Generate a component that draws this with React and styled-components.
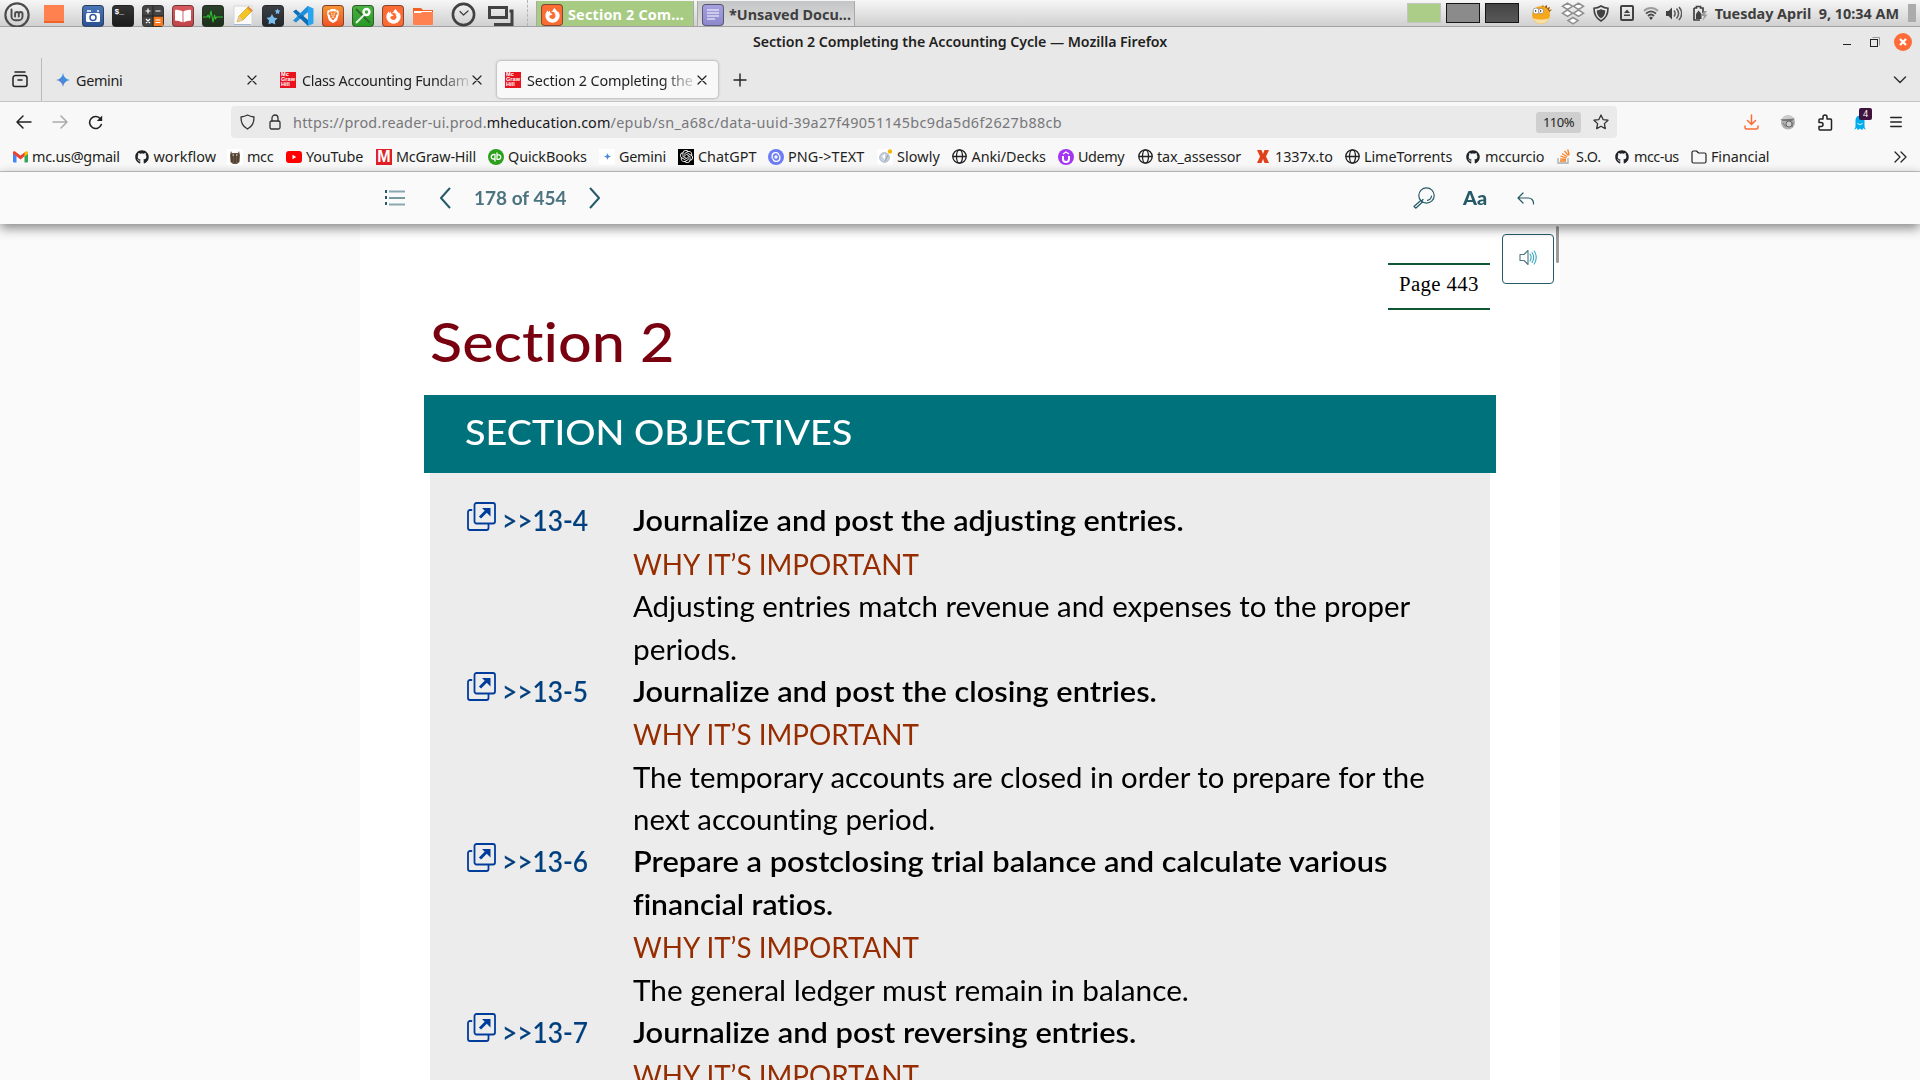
import React, { useLayoutEffect, useRef, useState } from "react";
import styled, { createGlobalStyle, css } from "styled-components";
import { FaGithub, FaFirefoxBrowser, FaBookOpen } from "react-icons/fa";
import { SiBrave, SiOpenai } from "react-icons/si";

const UI = `"Noto Sans", "Open Sans", sans-serif`;
const BOOK = `Lato, "Open Sans", sans-serif`;

const Global = createGlobalStyle`
  * { box-sizing: border-box; }
  html, body { margin: 0; height: 100%; overflow: hidden; background: #fafafa; }
  svg { display: block; flex: none; }
`;

/* A single line of text whose tracking is adjusted to fill a given width. */
const Line = styled.span`
  display: inline-block;
  white-space: pre;
  flex: none;
  transform-origin: left center;
  font-variant-ligatures: none;
  color: ${(p) => p.$color || "inherit"};
  font-weight: ${(p) => p.$weight || "inherit"};
  -webkit-text-stroke: ${(p) => p.$ink || 0}px currentColor;
`;
function Fit({ w, children, color, weight }) {
  const ref = useRef(null);
  const [spacing, setSpacing] = useState(0);
  useLayoutEffect(() => {
    setSpacing((w - ref.current.offsetWidth) / children.length);
  }, [w, children]);
  return (
    <Line ref={ref} $color={color} $weight={weight} style={{ letterSpacing: `${spacing}px` }}>
      {children}
    </Line>
  );
}
/* The same, but the letters themselves widen. */
function Stretch({ w, children, color, weight, ink }) {
  const ref = useRef(null);
  const [scale, setScale] = useState(1);
  useLayoutEffect(() => {
    setScale(w / ref.current.offsetWidth);
  }, [w, children]);
  return (
    <Line ref={ref} $color={color} $weight={weight} $ink={ink} style={{ transform: `scaleX(${scale})` }}>
      {children}
    </Line>
  );
}

const Screen = styled.div`
  width: 1920px;
  height: 1080px;
  overflow: hidden;
  display: flex;
  flex-direction: column;
  font-family: ${UI};
  font-size: 14.4px;
  color: #1f1f22;
`;

/* ---------- Desktop panel ---------- */
const Panel = styled.header`
  height: 27px;
  flex: none;
  display: flex;
  align-items: center;
  background: linear-gradient(#f6f6f6, #d0d0d0);
  border-bottom: 1px solid #a2a2a2;
  color: #3e3e3e;
`;
const Slot = styled.div`
  width: ${(p) => p.$w}px;
  height: 26px;
  flex: none;
  display: flex;
  align-items: center;
  padding-left: ${(p) => p.$pl || 0}px;
  padding-top: ${(p) => p.$pt || 0}px;
`;
const AppTile = styled.div`
  width: 22px;
  height: 22px;
  margin-top: 6px;
  border-radius: 4px;
  border: 1px solid rgba(40, 40, 40, 0.55);
  background: ${(p) => p.$bg};
  color: #fff;
  display: flex;
  align-items: center;
  justify-content: center;
`;
const Prompt = styled.div`
  align-self: flex-start;
  width: 17px;
  font: 700 8px/11px "Liberation Mono", monospace;
`;
const Separator = styled.div`
  width: 1px;
  height: 26px;
  flex: none;
  border-left: 1px dashed #b4b4b4;
  margin-right: 8px;
`;
const TaskButton = styled.div`
  width: ${(p) => p.$w}px;
  height: 25px;
  margin: 1px 3px 0 0;
  padding-left: 4px;
  flex: none;
  display: flex;
  align-items: center;
  gap: 5px;
  font-weight: 700;
  border: 1px solid #a9aaa6;
  border-width: 0 1px;
  background: ${(p) => (p.$active ? "#a7cb83" : "linear-gradient(#c4c5c6, #dcdcdc)")};
  color: ${(p) => (p.$active ? "#fff" : "#3f3f3f")};
  ${AppTile} { margin-top: 3px; }
  ${Line} { margin-top: 2px; }
`;
const Workspace = styled.div`
  width: 34px;
  height: 20px;
  margin: 0 5px 0 0;
  flex: none;
  background: ${(p) => p.$bg};
  border: 1px solid ${(p) => p.$edge};
`;
const Spacer = styled.div`
  flex: 1;
`;
const Clock = styled.div`
  font-weight: 700;
  font-size: 14.4px;
  display: flex;
  padding-top: 1px;
`;
const PanelGrip = styled.div`
  width: 8px;
  height: 18px;
  margin: 0 4px 0 9px;
  background: #ababab;
`;

/* ---------- Window frame ---------- */
const TitleBar = styled.div`
  height: 31px;
  flex: none;
  display: flex;
  align-items: center;
  padding-left: 753px;
  background: #e8e8e8;
  font-weight: 600;
  font-size: 14.2px;
  ${Line} { margin-top: -2px; }
`;
const WindowButtons = styled.div`
  display: flex;
  align-items: center;
  padding: 0 8px 1px 0;
`;
const TabStrip = styled.div`
  height: 44px;
  flex: none;
  display: flex;
  align-items: center;
  background: #e8e8e8;
  border-bottom: 1px solid #c5c5c5;
`;
const ViewButton = styled.div`
  width: 42px;
  height: 43px;
  flex: none;
  display: flex;
  align-items: center;
  padding-left: 12px;
  border-right: 1px solid #bababa;
`;
const Tab = styled.div`
  width: ${(p) => p.$w}px;
  height: 37px;
  margin-left: ${(p) => p.$ml || 0}px;
  padding-left: ${(p) => p.$pl}px;
  flex: none;
  display: flex;
  align-items: center;
  border-radius: 4px;
  ${(p) =>
    p.$active &&
    css`
      background: #f8f8f8;
      box-shadow: 0 0 3px rgba(0, 0, 0, 0.4);
    `}
`;
const TabTitle = styled.div`
  width: ${(p) => p.$w}px;
  margin: 1px 3px 0 6px;
  flex: none;
  ${(p) => p.$fade && css`mask-image: linear-gradient(to left, rgba(0, 0, 0, 0.15), #000 32px);`}
`;

/* ---------- Navigation ---------- */
const NavBar = styled.div`
  height: 40px;
  flex: none;
  display: flex;
  align-items: center;
  background: #f8f8f8;
  padding-left: 16px;
`;
const UrlBar = styled.div`
  width: 1386px;
  height: 32px;
  flex: none;
  display: flex;
  align-items: center;
  padding-left: 9px;
  border-radius: 4px;
  background: #eaeaea;
  color: #77777a;
`;
const UrlText = styled.div`
  display: flex;
  margin-left: 12px;
`;
const ZoomBadge = styled.div`
  width: 45px;
  height: 21px;
  display: flex;
  align-items: center;
  justify-content: center;
  border-radius: 3px;
  background: #cfcfcf;
  color: #1f1f22;
  font-size: 13px;
  margin-right: 12px;
`;
const GhostWrap = styled.div`
  position: relative;
  width: 36px;
  height: 16px;
`;
const GhostBadge = styled.div`
  position: absolute;
  left: 5px;
  top: -6px;
  width: 13px;
  height: 12px;
  border-radius: 2px;
  background: #40133f;
  color: #fff;
  font-size: 9px;
  line-height: 12px;
  text-align: center;
`;
const BookmarkBar = styled.div`
  height: 30px;
  flex: none;
  display: flex;
  align-items: center;
  padding: 0 13px 0 12px;
  background: #f8f8f8;
  border-bottom: 1px solid #c5c5c5;
`;
const Bookmark = styled.div`
  width: ${(p) => p.$w}px;
  flex: none;
  display: flex;
  align-items: center;
  gap: 4px;
`;
const Favicon = styled.div`
  width: 16px;
  height: 16px;
  flex: none;
  display: flex;
  align-items: center;
  justify-content: center;
  border-radius: ${(p) => p.$r || 0};
  background: ${(p) => p.$bg || "transparent"};
  color: ${(p) => p.$color || "#fff"};
  font: 700 ${(p) => p.$size || 14}px/16px "Liberation Sans", sans-serif;
`;
const McLogo = styled.div`
  width: 16px;
  height: 16px;
  flex: none;
  padding: 0 0 0 1px;
  background: #e8131f;
  color: #fff;
  font: 700 5.6px/5px "Liberation Sans", sans-serif;
`;

/* ---------- Reader ---------- */
const ReaderBar = styled.div`
  position: relative;
  z-index: 1;
  height: 52px;
  flex: none;
  display: flex;
  align-items: center;
  background: #fafafa;
  box-shadow: 0 4px 11px rgba(0, 0, 0, 0.48);
  padding-left: 385px;
  font-family: ${BOOK};
  color: #265a68;
`;
const PageCount = styled.div`
  width: 138px;
  padding-left: 23px;
  font-size: 18.6px;
  font-weight: 700;
  color: #4c7480;
`;
const TextSize = styled.div`
  width: 54px;
  font-size: 19px;
  font-weight: 900;
  margin-top: -2px;
`;
const Reader = styled.main`
  flex: 1;
  min-height: 0;
  width: 1200px;
  margin: 0 auto;
  background: #fff;
  font-family: ${BOOK};
  display: flex;
  flex-direction: column;
`;
const TopRow = styled.div`
  display: flex;
  justify-content: flex-end;
  align-items: flex-start;
  height: 86px;
  flex: none;
`;
const PageLabel = styled.div`
  width: 102px;
  height: 47px;
  margin: 39px 12px 0 0;
  border: 2px solid #0f5735;
  border-width: 2px 0;
  padding-left: 11px;
  font: 20.8px/38px "Liberation Serif", serif;
  color: #000;
`;
const AudioButton = styled.div`
  width: 52px;
  height: 50px;
  margin-top: 10px;
  border: 1px solid #265a68;
  border-radius: 4px;
  display: flex;
  justify-content: center;
  padding-top: 14px;
  background: #fff;
`;
const ScrollThumb = styled.div`
  width: 3px;
  height: 37px;
  margin: 2px 1px 0 2px;
  border-radius: 2px;
  background: #9c9c9c;
`;
const Heading = styled.h1`
  margin: 0 0 0 70px;
  height: 85px;
  flex: none;
  font-size: 54.5px;
  font-weight: 500;
  line-height: 63px;
  color: #78000f;
`;
const Banner = styled.h2`
  margin: 0 64px;
  height: 78px;
  flex: none;
  padding-left: 41px;
  background: #00727c;
  color: #fff;
  font-size: 33.8px;
  font-weight: 500;
  line-height: 75px;
`;
const Objectives = styled.section`
  margin: 0 70px;
  flex: 1;
  min-height: 0;
  overflow: hidden;
  padding: 26px 0 0 37px;
  background: #ececec;
  font-size: 28.4px;
  line-height: 42.64px;
  color: #000;
`;
const Objective = styled.div`
  display: grid;
  grid-template-columns: 166px 1fr;
`;
const Ref = styled.div`
  height: 42.64px;
  display: flex;
  gap: 6px;
  color: #003f7d;
  font-weight: 500;
  svg { margin-top: 2.5px; }
`;
const Row = styled.div`
  height: 42.64px;
  line-height: ${(p) => (p.$strong ? 42.64 : 44)}px;
  white-space: nowrap;
`;

const stroke = (c, w = 1.2) => ({ fill: "none", stroke: c, strokeWidth: w, strokeLinecap: "round", strokeLinejoin: "round" });

const Close = () => (
  <svg width="10" height="10" {...stroke("#222")}><path d="M1 1l8 8M9 1L1 9" /></svg>
);
const Gemini = ({ s = 14 }) => (
  <svg width={s} height={s} viewBox="0 0 14 14">
    <defs><linearGradient id="gem" x1="0" x2="1" y1="1" y2="0"><stop stopColor="#8b6fc0" /><stop offset=".55" stopColor="#3f8ddf" /><stop offset="1" stopColor="#3da0e0" /></linearGradient></defs>
    <path fill="url(#gem)" d="M7 0c.6 4 3 6.400 7 7-4 .6-6.400 3-7 7-.6-4-3-6.400-7-7 4-.6 6.400-3 7-7z" />
  </svg>
);
const Globe = () => (
  <svg width="15" height="15" viewBox="0 0 15 15" {...stroke("#222", 1.3)}>
    <circle cx="7.500" cy="7.500" r="6.700" /><ellipse cx="7.500" cy="7.500" rx="3" ry="6.700" /><path d="M1 7.500h13" />
  </svg>
);
const Mc = () => <McLogo>Mc<br />Graw<br />Hill</McLogo>;
const Gmail = () => (
  <svg width="15" height="12" viewBox="0 0 15 12">
    <path fill="#4285f4" d="M0 2v8.500a1 1 0 001 1h2.500V5z" /><path fill="#34a853" d="M15 2v8.500a1 1 0 01-1 1h-2.500V5z" />
    <path fill="#ea4335" d="M0 1.500C0 .2 1.500 0 2.500.8l5 3.800 5-3.800v3.800l-5 3.800-5-3.800L0 3z" />
    <path fill="#fbbc04" d="M11.500 1.500l1-.7C13.500 0 15 .3 15 1.800V3l-3.500 2.400z" />
  </svg>
);
const YouTube = () => (
  <svg width="16" height="12" viewBox="0 0 16 12"><rect width="16" height="12" rx="3" fill="#f00" /><path d="M6.500 3.800v4.400L10.200 6z" fill="#fff" /></svg>
);
const ChevronsRight = () => (
  <svg width="14" height="14" {...stroke("#222", 1.3)}><path d="M2 2l5 5-5 5M8 2l5 5-5 5" /></svg>
);
const MintLogo = () => (
  <svg width="26" height="26" viewBox="0 0 26 26" {...stroke("#4c4c4c", 2.2)}>
    <circle cx="13" cy="13" r="11.600" />
    <path d="M7.500 7.500v7a3.800 3.800 0 003.800 3.800h3.400a3.800 3.800 0 003.800-3.800v-2.600a1.850 1.850 0 00-3.700 0V14.500M14.800 14v-2.100a1.850 1.850 0 00-3.700 0V14.500" strokeWidth="1.900" />
  </svg>
);

const bookmarks = [
  { w: 121.5, t: "mc.us@gmail", tw: 88, icon: <Gmail /> },
  { w: 93.5, t: "workflow", tw: 62.5, color: "#1f2328", icon: <FaGithub size={14} /> },
  { w: 59, t: "mcc", tw: 26, bg: "#fff", icon: (
    <svg width="12" height="14" viewBox="0 0 12 14"><path d="M2 1l1 2h6l1-2 1 4-.5 7-2.500 2H4l-2.500-2L1 5z" fill="#6b5743" /><path d="M3 4v8M6 4v9M9 4v8" stroke="#37302a" /><path d="M3.500 5h1.500M7 5h1.500" stroke="#eee" /></svg>) },
  { w: 90, t: "YouTube", tw: 57, icon: <YouTube /> },
  { w: 112, t: "McGraw-Hill", tw: 80, bg: "#e01f27", icon: "M", size: 16 },
  { w: 111, t: "QuickBooks", tw: 79, bg: "#2ca01c", r: "50%", icon: (
    <svg width="12" height="10" {...stroke("#fff", 1.3)}><path d="M5 2.500H3.500a2.200 2.200 0 000 4.500H5M5 2.500V9M7 7.300h1.500a2.200 2.200 0 000-4.500H7M7 7.300V1" /></svg>) },
  { w: 79, t: "Gemini", tw: 46.5, bg: "#fff", icon: <Gemini s={7} /> },
  { w: 90, t: "ChatGPT", tw: 58, bg: "#000", icon: <SiOpenai size={13} /> },
  { w: 109, t: "PNG->TEXT", tw: 76, bg: "#6c7cf5", r: "50%", icon: (
    <svg width="10" height="10" {...stroke("#fff", 1.3)}><path d="M1.200 6V4.500A3.500 3.500 0 018 3M8.800 4v1.500A3.500 3.500 0 012 7" /><circle cx="5" cy="5" r="1" /></svg>) },
  { w: 74.5, t: "Slowly", tw: 42.5, bg: "#fff", r: "3px", icon: (
    <svg width="16" height="16"><circle cx="7.500" cy="8.500" r="4.800" fill="#c9d2df" stroke="#a8b2c2" /><path d="M5 7l3-2v6z" fill="#fff" /><path d="M8 12l3-6" stroke="#8b97a8" /><circle cx="13" cy="2.500" r="2.200" fill="#f5b400" /></svg>) },
  { w: 106.5, t: "Anki/Decks", tw: 74.5, icon: <Globe /> },
  { w: 79, t: "Udemy", tw: 46, bg: "#a435f0", r: "50%", icon: (
    <svg width="10" height="12"><path d="M2 5v3a3 3 0 006 0V5" fill="none" stroke="#fff" strokeWidth="2" /><path d="M2 3l3-2 3 2" fill="none" stroke="#fff" strokeWidth="1.300" /></svg>) },
  { w: 118, t: "tax_assessor", tw: 84.5, icon: <Globe /> },
  { w: 89, t: "1337x.to", tw: 57.5, icon: (
    <svg width="12" height="13" viewBox="0 0 12 13"><path d="M0 0h4.500L6 4l1.500-4H12L9 6.500 12 13H7.500L6 9l-1.500 4H0l3-6.500z" fill="#e0401a" /></svg>) },
  { w: 121, t: "LimeTorrents", tw: 88, icon: <Globe /> },
  { w: 91, t: "mccurcio", tw: 59, color: "#1f2328", icon: <FaGithub size={14} /> },
  { w: 58, t: "S.O.", tw: 25.5, icon: (
    <svg width="14" height="15" viewBox="0 0 14 15" fill="none" strokeWidth="1.300"><path d="M1 9v5h10V9" stroke="#a9abad" /><path d="M3 12h6M3 9.800l6 .7M3.600 7.200l5.800 1.800M5 4.500l5.200 3.200M7.500 2l4 4.700M10.700.5l1.500 5.500" stroke="#f48024" /></svg>) },
  { w: 77, t: "mcc-us", tw: 45, color: "#1f2328", icon: <FaGithub size={14} /> },
  { w: 100, t: "Financial", tw: 58, icon: (
    <svg width="16" height="14" {...stroke("#222", 1.2)}><path d="M1 11.500v-9A1.500 1.500 0 012.500 1h3l2 2h6A1.500 1.500 0 0115 4.500v7a1.500 1.500 0 01-1.500 1.500h-11A1.500 1.500 0 011 11.500z" /></svg>) },
];

const why = { t: "WHY IT’S IMPORTANT", w: 286, c: "#962d00" };
const objectives = [
  { id: ">>13-4", rows: [{ t: "Journalize and post the adjusting entries.", w: 551, b: 1 }, why, { t: "Adjusting entries match revenue and expenses to the proper", w: 777 }, { t: "periods.", w: 104 }] },
  { id: ">>13-5", rows: [{ t: "Journalize and post the closing entries.", w: 524, b: 1 }, why, { t: "The temporary accounts are closed in order to prepare for the", w: 791.5 }, { t: "next accounting period.", w: 302 }] },
  { id: ">>13-6", rows: [{ t: "Prepare a postclosing trial balance and calculate various", w: 754.5, b: 1 }, { t: "financial ratios.", w: 200, b: 1 }, why, { t: "The general ledger must remain in balance.", w: 556 }] },
  { id: ">>13-7", rows: [{ t: "Journalize and post reversing entries.", w: 503, b: 1 }, why] },
];

const Popout = () => (
  <svg width="29" height="29" viewBox="0 0 29 29" {...stroke("#003c9c", 1.8)}>
    <rect x="7.500" y="1" width="20.500" height="20.500" rx="2" />
    <path d="M4.500 8H3a2 2 0 00-2 2v16a2 2 0 002 2h16.500a2 2 0 002-2v-1.500M21.500 22v3" />
    <path d="M13 15.500l7-7" strokeWidth="3" strokeLinecap="butt" />
    <path d="M15 6h8.500v8.500z" fill="#003c9c" stroke="none" />
  </svg>
);

function DesktopPanel() {
  return (
    <Panel>
      <Slot $w={44} $pl={4} $pt={3}><MintLogo /></Slot>
      <Slot $w={38} $pt={2}>
        <svg width="20" height="18"><rect width="20" height="18" fill="#ff8150" /><path d="M0 17h20" stroke="#ef6426" strokeWidth="2" /></svg>
      </Slot>
      <Slot $w={30}><AppTile $bg="linear-gradient(#4a76b8,#2b5192)">
        <svg width="16" height="14"><path d="M2 2h4M12 2h2" stroke="#fff" strokeWidth="1.500" /><rect x="1" y="4" width="14" height="9" rx="1.500" fill="#fff" /><circle cx="8" cy="8.500" r="3" fill="none" stroke="#33599b" strokeWidth="1.500" /></svg>
      </AppTile></Slot>
      <Slot $w={30}><AppTile $bg="linear-gradient(#343434,#1b1b1b)"><Prompt>$_</Prompt></AppTile></Slot>
      <Slot $w={30}><AppTile $bg="#454545">
        <svg width="20" height="20" viewBox="0 0 20 20"><rect x="10.500" y="10.500" width="9.500" height="9.500" fill="#f8791d" /><path d="M10 0v20M0 10h20" stroke="#222" /><path d="M2.500 5h5M5 2.500v5M12.500 5h5M3 13l4 4M7 13l-4 4M12.500 14h5M12.500 16.500h5" stroke="#fff" strokeWidth="1.200" /></svg>
      </AppTile></Slot>
      <Slot $w={30}><AppTile $bg="linear-gradient(#d95a5e,#c04448)"><FaBookOpen size={16} /></AppTile></Slot>
      <Slot $w={31}><AppTile $bg="linear-gradient(#2b4029,#1c2f1c)">
        <svg width="20" height="14" {...stroke("#31c02e", 1.1)}><path d="M0 8h4l1-2 1.500 3L8 2l2 11 1.500-7 1 4 1-2H20" /></svg>
      </AppTile></Slot>
      <Slot $w={29} $pt={3}>
        <svg width="22" height="22" viewBox="0 0 22 22"><path d="M1 2h18v19H1z" fill="#fbfbfb" stroke="#d5d5d5" /><path d="M1 20.500h17" stroke="#9db8d8" /><path d="M4 18l2-6L15.500 2.500l4 4L10 16z" fill="#f4c522" stroke="#c69712" strokeWidth=".6" /><path d="M4 18l2-6 4 4z" fill="#e8c99a" /><path d="M14 4l1.500-1.500 4 4L18 8z" fill="#e88b3a" /></svg>
      </Slot>
      <Slot $w={30}><AppTile $bg="linear-gradient(#3b3e42,#25282b)">
        <svg width="20" height="20" fill="#79bdf0"><path d="M9 8l1.800 3.400 3.700.8-2.600 2.600.3 3.800L9 17l-3.500 1.300.5-3.700-2.500-2.800 3.700-.6z" /><path d="M14.500 2.500l.9 1.800 2 .4-1.400 1.400.2 2-1.700-.9-1.800.8.4-2-1.400-1.400 2-.3z" /></svg>
      </AppTile></Slot>
      <Slot $w={30} $pt={3}>
        <svg width="22" height="24" viewBox="0 -2 22 24"><path d="M16 1l5.500 2.500v15L16 21z" fill="#29a5ef" /><path d="M16 1v6L4 17.500 1 15.500z" fill="#1f8fdc" /><path d="M16 21v-6L4 4.500 1 6.500z" fill="#0d6fb8" /><path d="M16 1L6 10.500l-1.500 1.500L16 7z" fill="#2190dd" /></svg>
      </Slot>
      <Slot $w={30}><AppTile $bg="linear-gradient(#f59436,#ee5427)"><SiBrave size={14} /></AppTile></Slot>
      <Slot $w={30}><AppTile $bg="linear-gradient(#4bb043,#279a25)">
        <svg width="20" height="20" fill="none"><path d="M3 3l14 14" stroke="#2d6d29" strokeWidth="2" /><circle cx="13.500" cy="6" r="3" stroke="#fff" strokeWidth="2.400" /><path d="M11.500 8.500L3 17" stroke="#e4eee3" strokeWidth="2" /></svg>
      </AppTile></Slot>
      <Slot $w={31}><AppTile $bg="#fb6c35"><FaFirefoxBrowser size={15} /></AppTile></Slot>
      <Slot $w={38} $pt={2}>
        <svg width="20" height="22" viewBox="0 -4 20 22"><path d="M0 1h8l2 2h10v3H0z" fill="#ee6226" /><path d="M1 4h18v2H1z" fill="#fff" /><path d="M0 6h8l1-1h11v12a1 1 0 01-1 1H1a1 1 0 01-1-1z" fill="#ff8150" /></svg>
      </Slot>
      <Slot $w={37} $pt={2}>
        <svg width="25" height="25" viewBox="0 0 25 25" {...stroke("#424242", 2.6)}><circle cx="12.500" cy="12.500" r="10.600" /><path d="M9 9.500l3.500 3.500L17 9" strokeWidth="1.300" /></svg>
      </Slot>
      <Slot $w={39} $pt={1}>
        <svg width="26" height="25" viewBox="0 -4 26 25" fill="none" stroke="#424242" strokeWidth="3"><path d="M1.500 2.500h17v10h-17z" /><path d="M21.500 6H24v13.500H6" /></svg>
      </Slot>
      <Separator />
      <TaskButton $w={158} $active>
        <AppTile $bg="#fb6c35"><FaFirefoxBrowser size={15} /></AppTile>
        <Fit w={116}>Section 2 Com...</Fit>
      </TaskButton>
      <TaskButton $w={158}>
        <AppTile $bg="linear-gradient(#a5a1df,#8d88cc)">
          <svg width="14" height="14"><path d="M1 2h12M1 5h12M1 8h12M1 11h8" stroke="#fff" strokeWidth="1.100" /></svg>
        </AppTile>
        <Fit w={122}>*Unsaved Docu...</Fit>
      </TaskButton>
      <Spacer />
      <Workspace $bg="#abcd88" $edge="#c2c5c0" />
      <Workspace $bg="#8b8b8b" $edge="#161616" />
      <Workspace $bg="linear-gradient(#444,#585858)" $edge="#161616" />
      <Slot $w={37} $pt={1}>
        <svg width="30" height="22" viewBox="-7 0 30 22"><path d="M10 4l2-2 1 2 3-2v3l3-1-1 3 3-.5-3 3" fill="#9a5c0c" /><circle cx="10" cy="12" r="9" fill="#f5a81c" /><path d="M2 15a8.500 8.500 0 0016 0c-4 2-12 2-16 0z" fill="#f7dfa8" /><circle cx="5" cy="8" r="3" fill="#fff" stroke="#777" strokeWidth=".6" /><circle cx="10" cy="8" r="2.600" fill="#fff" stroke="#777" strokeWidth=".6" /><circle cx="4.600" cy="8" r=".8" /><circle cx="9.600" cy="8" r=".8" /></svg>
      </Slot>
      <Slot $w={32}>
        <svg width="24" height="23" viewBox="0 0 24 23" fill="#fff" stroke="#8e8e8e" strokeWidth="1.500"><path d="M6.500 1.200l5 3.100-5 3.200-5-3.200zM17.500 1.200l5 3.100-5 3.200-5-3.200zM6.500 8l5 3.200-5 3.100-5-3.100zM17.500 8l5 3.200-5 3.100-5-3.100zM12 15.500l5 3.100-5 3.200-5-3.200z" /></svg>
      </Slot>
      <Slot $w={27}>
        <svg width="16" height="17" viewBox="0 0 16 17"><path d="M8 1c2.500 1.700 4.500 2.200 7 2.300 0 6-1.800 10-7 12.700C2.800 13.300 1 9.300 1 3.300 3.500 3.200 5.500 2.700 8 1z" fill="none" stroke="#424242" strokeWidth="1.600" /><path d="M8 4c1.500 1 3 1.400 4.300 1.500C12 9.500 11 11.600 8 13.300 5 11.600 4 9.500 3.700 5.500 5 5.400 6.500 5 8 4z" fill="#424242" /></svg>
      </Slot>
      <Slot $w={23}>
        <svg width="14" height="16"><rect x="1" y="1" width="12" height="14" rx="1" fill="none" stroke="#424242" strokeWidth="2" /><path d="M7 4.500l3 3.500H4zM4 9.500h6v1.500H4z" fill="#424242" /></svg>
      </Slot>
      <Slot $w={23}>
        <svg width="16" height="14" viewBox="0 0 16 14" fill="none" strokeWidth="1.800"><path d="M1 5c4-4 10-4 14 0" stroke="#9d9d9d" /><path d="M3 7.600c3-3 7-3 10 0M5 10c2-2 4-2 6 0" stroke="#4a4a4a" /><path d="M8 10.500l2 1.200-2 2.300-2-2.300z" fill="#424242" /></svg>
      </Slot>
      <Slot $w={27}>
        <svg width="16" height="15" viewBox="0 0 16 15"><path d="M0 5h2.500L6 1.500v12L2.500 10H0z" fill="#424242" /><path d="M8 4.500c1.300 1.700 1.300 4.300 0 6M10.500 2.500c2.500 3 2.500 7 0 10M13 1c3.300 4 3.300 9 0 13" fill="none" stroke="#5a5a5a" strokeWidth="1.500" /></svg>
      </Slot>
      <Slot $w={22}>
        <svg width="15" height="17"><path d="M1 3h2.500V1.500h4V3H10v5M7 15H1V3" fill="none" stroke="#424242" strokeWidth="1.700" /><path d="M3 9l2.500-3.500L8.500 9V14H3z" fill="#424242" /><path d="M11 6l-3 5h3l-1.500 5 5-6.500h-3L14 6z" fill="#999" /></svg>
      </Slot>
      <Clock><Fit w={184}>Tuesday April  9, 10:34 AM</Fit></Clock>
      <PanelGrip />
    </Panel>
  );
}

export default function App() {
  return (
    <>
      <Global />
      <Screen>
        <DesktopPanel />
        <TitleBar>
          <Fit w={414}>Section 2 Completing the Accounting Cycle — Mozilla Firefox</Fit>
          <Spacer />
          <WindowButtons>
            <svg width="69" height="18" viewBox="0 0 69 18">
              <path d="M0 11.500h8" stroke="#222" />
              <path d="M29.500 4.500h7v8" fill="none" stroke="#999" /><rect x="27.500" y="6.500" width="7" height="7" fill="none" stroke="#222" />
              <circle cx="60" cy="9" r="9" fill="#ff6b38" /><path d="M57 6l6 6M63 6l-6 6" stroke="#fff" strokeWidth="2.200" />
            </svg>
          </WindowButtons>
        </TitleBar>
        <TabStrip>
          <ViewButton>
            <svg width="16" height="17" viewBox="0 0 16 17" {...stroke("#222", 1.5)}><path d="M3 1h10" /><path d="M1 7a2.500 2.500 0 012.500-2.500h9A2.500 2.500 0 0115 7v6.500a2 2 0 01-2 2H3a2 2 0 01-2-2zM6 9h4" /></svg>
          </ViewButton>
          <Tab $w={223} $pl={14}>
            <Gemini />
            <TabTitle $w={168}><Fit w={46}>Gemini</Fit></TabTitle>
            <Close />
          </Tab>
          <Tab $w={221} $ml={1} $pl={14}>
            <Mc />
            <TabTitle $w={167} $fade><Fit w={167}>Class Accounting Fundam</Fit></TabTitle>
            <Close />
          </Tab>
          <Tab $w={221} $ml={10} $pl={8} $active>
            <Mc />
            <TabTitle $w={167} $fade><Fit w={166}>Section 2 Completing the</Fit></TabTitle>
            <Close />
          </Tab>
          <Slot $w={15} />
          <svg width="14" height="14" {...stroke("#222", 1.4)}><path d="M7 1v12M1 7h12" /></svg>
          <Spacer />
          <svg width="14" height="8" {...stroke("#333", 1.5)}><path d="M1.500 1L7 6.500 12.500 1" /></svg>
          <Slot $w={13} />
        </TabStrip>
        <NavBar>
          <Slot $w={36}><svg width="16" height="14" {...stroke("#222", 1.5)}><path d="M15 7H1M7 1L1 7l6 6" /></svg></Slot>
          <Slot $w={36}><svg width="16" height="14" {...stroke("#aaa", 1.5)}><path d="M1 7h14M9 1l6 6-6 6" /></svg></Slot>
          <Slot $w={143}><svg width="15" height="15" {...stroke("#222", 1.6)}><path d="M13.300 9.500A6 6 0 1112.500 4" /><path d="M14.200 .5v5.500H8.800z" fill="#222" stroke="none" /></svg></Slot>
          <UrlBar>
            <Slot $w={29}><svg width="15" height="16" viewBox="0 0 15 16" {...stroke("#333", 1.3)}><path d="M7.500 1c2 1 4 1.600 6.500 2 0 6-1.500 9-6.500 12C2.500 12 1 9 1 3c2.500-.4 4.500-1 6.500-2z" /></svg></Slot>
            <svg width="12" height="16" {...stroke("#333", 1.3)}><rect x="1" y="7" width="10" height="8" rx="1.500" /><path d="M3 7V4a3 3 0 016 0v3" /></svg>
            <UrlText>
              <Fit w={193.5}>https://prod.reader-ui.prod.</Fit>
              <Fit w={124} color="#17171a">mheducation.com</Fit>
              <Fit w={451.5}>/epub/sn_a68c/data-uuid-39a27f49051145bc9da5d6f2627b88cb</Fit>
            </UrlText>
            <Spacer />
            <ZoomBadge><Fit w={31}>110%</Fit></ZoomBadge>
            <Slot $w={24}><svg width="16" height="16" viewBox="0 0 16 16" {...stroke("#333", 1.3)}><path d="M8 1l2.100 4.600 4.900.6-3.600 3.400.9 5L8 12.200 3.700 14.600l.9-5L1 6.200l4.900-.6z" /></svg></Slot>
          </UrlBar>
          <Spacer />
          <Slot $w={36}><svg width="15" height="16" {...stroke("#fb6c35", 1.5)}><path d="M7.500 1v9M3.500 6.500l4 4 4-4M1 12v1.500A1.500 1.500 0 002.500 15h10a1.500 1.500 0 001.500-1.500V12" /></svg></Slot>
          <Slot $w={38}><svg width="16" height="16"><circle cx="8" cy="8.500" r="7" fill="#b0b0b0" /><path d="M2 5C4 0 11 0 14 4l-3 2z" fill="#ccc" /><path d="M0 5.500l15-1-3 2.500H3z" fill="#777" /><circle cx="9" cy="10" r="3" fill="#ccc" stroke="#666" /><path d="M3 9l3 4M13 8l-1 5" stroke="#777" /></svg></Slot>
          <Slot $w={36}><svg width="15" height="17" {...stroke("#222", 1.5)}><path d="M5 5V3a2 2 0 014 0v2h3.500a1 1 0 011 1v9a1 1 0 01-1 1H2a1 1 0 01-1-1v-2.500h2a2 2 0 000-4H1V6a1 1 0 011-1z" /></svg></Slot>
          <GhostWrap>
            <svg width="13" height="16"><path d="M0 15.500c1-1 1.500-2 1.500-4V6a4.500 4.500 0 019 0v5.500c0 2 .5 3 1.500 4-1.500 0-2-.8-2.500-1.500L8 16l-2-1.500L4 16l-1.500-2c-.5.700-1 1.500-2.500 1.500z" fill="#00aef0" /><path d="M3.500 9c1 2 4 2 5 0" stroke="#fff" fill="none" /></svg>
            <GhostBadge>4</GhostBadge>
          </GhostWrap>
          <svg width="12" height="12" {...stroke("#222", 1.3)}><path d="M.7 1.500h10.600M.7 6h10.600M.7 10.500h10.600" /></svg>
          <Slot $w={18} />
        </NavBar>
        <BookmarkBar>
          {bookmarks.map((b, i) => (
            <Bookmark key={i} $w={b.w}>
              <Favicon $bg={b.bg} $r={b.r} $color={b.color} $size={b.size}>{b.icon}</Favicon>
              <Fit w={b.tw}>{b.t}</Fit>
            </Bookmark>
          ))}
          <Spacer />
          <ChevronsRight />
        </BookmarkBar>
        <ReaderBar>
          <Slot $w={54}>
            <svg width="20" height="18"><path d="M0 1v4M0 7v4M0 13v4" stroke="#265a68" strokeWidth="4" strokeDasharray="3 1" /><path d="M4 2.500h16M4 15.500h16" stroke="#8aa7af" strokeWidth="2" /><path d="M4 9h16" stroke="#265a68" strokeWidth="1.200" /></svg>
          </Slot>
          <svg width="12" height="22" {...stroke("#265a68", 2)}><path d="M10.500 1.500L2 11l8.500 9.500" /></svg>
          <PageCount><Stretch w={93}>178 of 454</Stretch></PageCount>
          <svg width="12" height="22" {...stroke("#265a68", 2)}><path d="M1.500 1.500L10 11l-8.500 9.500" /></svg>
          <Slot $w={812} />
          <Slot $w={50}>
            <svg width="22" height="22" {...stroke("#265a68", 1.2)}><circle cx="13.500" cy="8.500" r="7.700" /><path d="M18.500 9a5 5 0 01-4 4.300" /><path d="M8 13.300l-7 6.200 1.700 1.700L9.500 15M8.500 14.200L10 12.500" /></svg>
          </Slot>
          <TextSize><Stretch w={24}>Aa</Stretch></TextSize>
          <svg width="18" height="13" {...stroke("#265a68", 1.2)}><path d="M6 1L1 6l5 5M1 6h10.500A5 5 0 0116.500 11v1" /></svg>
        </ReaderBar>
        <Reader>
          <TopRow>
            <PageLabel><Fit w={80}>Page 443</Fit></PageLabel>
            <AudioButton>
              <svg width="18" height="17" {...stroke("#4d7683", 1.1)}><path d="M1 5.500h4L9 1.500v14L5 11.500H1z" /><path d="M11 5c1.300 2 1.300 5 0 7M13 3.500c2 3 2 7 0 10M15.200 2c2.500 4 2.500 9 0 13" stroke="#35a9c0" /></svg>
            </AudioButton>
            <ScrollThumb />
          </TopRow>
          <Heading><Stretch w={244}>Section 2</Stretch></Heading>
          <Banner><Stretch w={387}>SECTION OBJECTIVES</Stretch></Banner>
          <Objectives>
            {objectives.map((o) => (
              <Objective key={o.id}>
                <Ref><Popout /><Stretch w={86} ink={0.2}>{o.id}</Stretch></Ref>
                <div>
                  {o.rows.map((r, i) => (
                    <Row key={i} $strong={r.b}><Stretch w={r.w} color={r.c} weight={r.b ? 600 : 400}>{r.t}</Stretch></Row>
                  ))}
                </div>
              </Objective>
            ))}
          </Objectives>
        </Reader>
      </Screen>
    </>
  );
}
